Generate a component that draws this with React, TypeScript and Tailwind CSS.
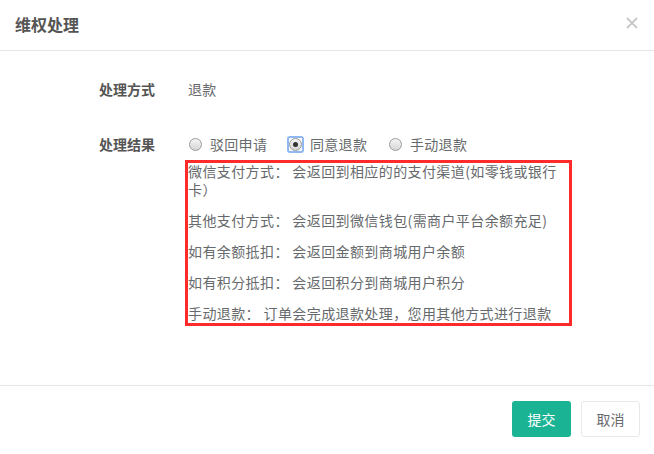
import React from "react";

const font = { fontFamily: '"Noto Sans CJK SC", "Noto Sans", sans-serif' };

const Radio = ({ label, checked }: { label: string; checked?: boolean }) => {
  return (
    <label className="flex items-center w-[100px]">
      <span className="relative flex items-center justify-center w-[13px] h-[13px] rounded-full border border-[#9a9a9a] bg-gradient-to-b from-[#f4f4f4] to-[#d6d6d6] mr-[8px]">
        {checked && <span className="w-[5px] h-[5px] rounded-full bg-[#333]" />}
        {checked && (
          <span className="absolute -inset-[3px] rounded-[3px] border-2 border-[#8fb8f0]" />
        )}
      </span>
      <span className="tracking-[0.3px]">{label}</span>
    </label>
  );
};

const notes = [
  "微信支付方式： 会返回到相应的的支付渠道(如零钱或银行卡）",
  "其他支付方式： 会返回到微信钱包(需商户平台余额充足)",
  "如有余额抵扣： 会返回金额到商城用户余额",
  "如有积分抵扣： 会返回积分到商城用户积分",
  "手动退款： 订单会完成退款处理，您用其他方式进行退款",
];

export default function App() {
  return (
    <div className="w-[654px] h-[454px] bg-white text-[14px] text-[#676a6c] flex flex-col" style={font}>
      <div className="h-[51px] border-b border-[#e5e5e5] flex items-start justify-between pl-[15px] pr-[16px] pt-[12px]">
        <h4 className="text-[16px] leading-[24px] font-bold text-[#555]">维权处理</h4>
        <svg width="12" height="12" viewBox="0 0 12 12" className="mt-[5px]">
          <path d="M1 1 L11 11 M11 1 L1 11" stroke="#c8c8c8" strokeWidth="1.8" />
        </svg>
      </div>

      <div className="flex-1 pt-[26px]">
        <div className="flex items-center h-[24px]">
          <div className="w-[155px] text-right font-bold text-[#555]">处理方式</div>
          <div className="pl-[33px] tracking-[0.3px]">退款</div>
        </div>

        <div className="flex mt-[31px]">
          <div className="w-[155px] text-right font-bold text-[#555] h-[24px] leading-[24px]">处理结果</div>
          <div className="pl-[30px] flex flex-col">
            <div className="flex items-center h-[24px] pl-[4px]">
              <Radio label="驳回申请" />
              <Radio label="同意退款" checked />
              <Radio label="手动退款" />
            </div>
            <div className="mt-[4px] w-[387px] h-[166px] border-[3px] border-[#ff2b2b] pr-[5px] leading-[18px] tracking-[0.4px]">
              {notes.map((n, i) => (
                <p key={n} className={i === 0 ? "-mt-px" : "mt-[13px]"}>
                  {n}
                </p>
              ))}
            </div>
          </div>
        </div>
      </div>

      <div className="h-[69px] border-t border-[#e5e5e5] flex items-center justify-end pr-[14px] gap-[10px] pb-[2px]">
        <button className="h-[36px] w-[59px] rounded-[3px] bg-[#1ab394] text-white">提交</button>
        <button className="h-[36px] w-[59px] rounded-[3px] bg-white border border-[#e7eaec] text-[#676a6c]">取消</button>
      </div>
    </div>
  );
}
